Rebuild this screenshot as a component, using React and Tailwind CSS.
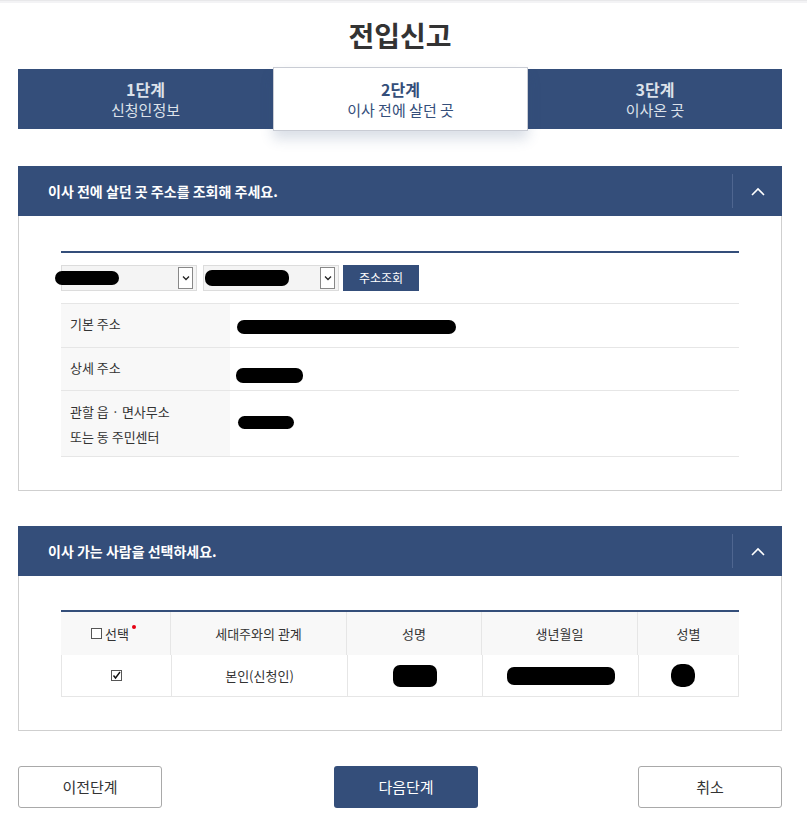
import React from "react";

const F = { fontFamily: '"Noto Sans CJK KR", "Noto Sans", sans-serif' };

function Chevron() {
  return (
    <svg width="14" height="9" viewBox="0 0 14 9" fill="none">
      <path d="M1 8 L7 2 L13 8" stroke="white" strokeWidth="1.6" />
    </svg>
  );
}

function SectionHeader({ title }) {
  return (
    <div className="flex h-[50px] items-center bg-[#344e7a]">
      <div className="flex-1 pl-[30px] text-[14px] font-bold text-white">{title}</div>
      <div className="h-[34px] w-px bg-[#4f6690]" />
      <div className="flex w-[49px] items-center justify-center">
        <Chevron />
      </div>
    </div>
  );
}

function Blob({ className }) {
  return <div className={"rounded-[7px] bg-black " + className} />;
}

function Select({ blob }) {
  return (
    <div className="relative flex h-[26px] w-[136px] items-center border border-[#dcdcdc] bg-[#f4f4f4]">
      <div className="flex-1">{blob}</div>
      <div className="mr-[3px] flex h-[22px] w-[15px] items-center justify-center border border-[#888] bg-white">
        <svg width="8" height="6" viewBox="0 0 8 6" fill="none">
          <path d="M1 1.5 L4 4.5 L7 1.5" stroke="#222" strokeWidth="1.3" />
        </svg>
      </div>
    </div>
  );
}

export default function App() {
  return (
    <div className="min-h-[824px] bg-white text-[#333]" style={F}>
      <div className="h-[3px] border-t border-[#e8e8ea] bg-[#f3f3f5]" />
      <div className="ml-[18px] w-[764px]">
        <h1 className="flex h-[66px] items-center justify-center pb-[2px] text-[28px] font-bold text-[#333]">
          전입신고
        </h1>
        <div className="relative flex h-[60px] bg-[#344e7a]">
          <div className="flex w-[255px] flex-col items-center justify-center text-[#dde2ea]">
            <div className="text-[16px] font-bold leading-[22px]">1단계</div>
            <div className="text-[15px] leading-[20px]">신청인정보</div>
          </div>
          <div className="-mt-[2px] flex h-[64px] w-[255px] flex-col items-center justify-center border border-[#c9ccd4] bg-white text-[#344e7a] shadow-[0_8px_12px_rgba(52,78,122,0.18)]">
            <div className="text-[16px] font-bold leading-[22px]">2단계</div>
            <div className="text-[15px] leading-[20px]">이사 전에 살던 곳</div>
          </div>
          <div className="flex flex-1 flex-col items-center justify-center text-[#dde2ea]">
            <div className="text-[16px] font-bold leading-[22px]">3단계</div>
            <div className="text-[15px] leading-[20px]">이사온 곳</div>
          </div>
        </div>

        <div className="mt-[37px]">
          <SectionHeader title="이사 전에 살던 곳 주소를 조회해 주세요." />
          <div className="border border-t-0 border-[#cfcfcf] px-[42px] pb-[33px] pt-[35px]">
            <div className="h-[2px] bg-[#344e7a]" />
            <div className="mt-[12px] flex gap-[6px]">
              <Select blob={<Blob className="-ml-[7px] h-[14px] w-[64px]" />} />
              <Select blob={<Blob className="ml-[1px] h-[16px] w-[84px]" />} />
              <div className="-ml-[2px] flex h-[26px] w-[76px] items-center justify-center bg-[#344e7a] text-[12px] text-white">
                주소조회
              </div>
            </div>
            <div className="mt-[12px] border-t border-[#e6e6e6] text-[13px]">
              <div className="flex h-[44px] border-b border-[#e6e6e6]">
                <div className="flex w-[169px] items-center bg-[#f8f8f8] pl-[9px] pb-[3px]">기본 주소</div>
                <div className="flex items-center pl-[7px] pt-[3px]">
                  <Blob className="h-[14px] w-[219px]" />
                </div>
              </div>
              <div className="flex h-[43px] border-b border-[#e6e6e6]">
                <div className="flex w-[169px] items-center bg-[#f8f8f8] pl-[9px] pb-[3px]">상세 주소</div>
                <div className="flex items-center pl-[6px] pt-[12px]">
                  <Blob className="h-[15px] w-[67px]" />
                </div>
              </div>
              <div className="flex h-[66px] border-b border-[#e6e6e6]">
                <div className="flex w-[169px] flex-col justify-center bg-[#f8f8f8] pl-[9px] leading-[25px]">
                  <div>관할 읍 · 면사무소</div>
                  <div>또는 동 주민센터</div>
                </div>
                <div className="flex items-center pl-[8px] pb-[3px]">
                  <Blob className="h-[13px] w-[56px]" />
                </div>
              </div>
            </div>
          </div>
        </div>

        <div className="mt-[35px]">
          <SectionHeader title="이사 가는 사람을 선택하세요." />
          <div className="border border-t-0 border-[#cfcfcf] px-[42px] pb-[33px] pt-[34px]">
            <div className="h-[2px] bg-[#344e7a]" />
            <div className="text-[13px]">
              <div className="grid h-[43px] grid-cols-[110px_176px_135px_156px_1fr] bg-[#f8f8f8]">
                <div className="flex items-center justify-center border-r border-[#e6e6e6] pr-[4px]">
                  <span className="mr-[3px] inline-block h-[11px] w-[11px] border border-[#555] bg-white" />
                  <span>선택</span>
                  <span className="mb-[14px] ml-[3px] h-[4px] w-[4px] rounded-full bg-[#e60012]" />
                </div>
                <div className="flex items-center justify-center border-r border-[#e6e6e6]">세대주와의 관계</div>
                <div className="flex items-center justify-center border-r border-[#e6e6e6]">성명</div>
                <div className="flex items-center justify-center border-r border-[#e6e6e6]">생년월일</div>
                <div className="flex items-center justify-center">성별</div>
              </div>
              <div className="grid h-[42px] grid-cols-[110px_176px_135px_156px_1fr] border-x border-b border-[#e6e6e6]">
                <div className="flex items-center justify-center border-r border-[#e6e6e6] pr-[1px]">
                  <span className="flex h-[11px] w-[11px] items-center justify-center border border-[#555]">
                    <svg width="9" height="9" viewBox="0 0 9 9" fill="none">
                      <path d="M1.5 4.5 L3.5 7 L8 1" stroke="#111" strokeWidth="1.4" />
                    </svg>
                  </span>
                </div>
                <div className="flex items-center justify-center border-r border-[#e6e6e6]">본인(신청인)</div>
                <div className="flex items-center justify-center border-r border-[#e6e6e6]">
                  <Blob className="h-[22px] w-[44px]" />
                </div>
                <div className="flex items-center justify-center border-r border-[#e6e6e6]">
                  <Blob className="h-[18px] w-[108px]" />
                </div>
                <div className="flex items-center justify-center pr-[12px]">
                  <Blob className="h-[23px] w-[24px] rounded-[10px]" />
                </div>
              </div>
            </div>
          </div>
        </div>

        <div className="mt-[35px] flex items-center justify-between">
          <button className="h-[42px] w-[144px] rounded-[3px] border border-[#a9a9a9] bg-white text-[15px] text-[#333]">
            이전단계
          </button>
          <button className="ml-[12px] h-[42px] w-[144px] rounded-[3px] bg-[#344e7a] text-[15px] text-white">
            다음단계
          </button>
          <button className="h-[42px] w-[144px] rounded-[3px] border border-[#a9a9a9] bg-white text-[15px] text-[#333]">
            취소
          </button>
        </div>
      </div>
    </div>
  );
}
